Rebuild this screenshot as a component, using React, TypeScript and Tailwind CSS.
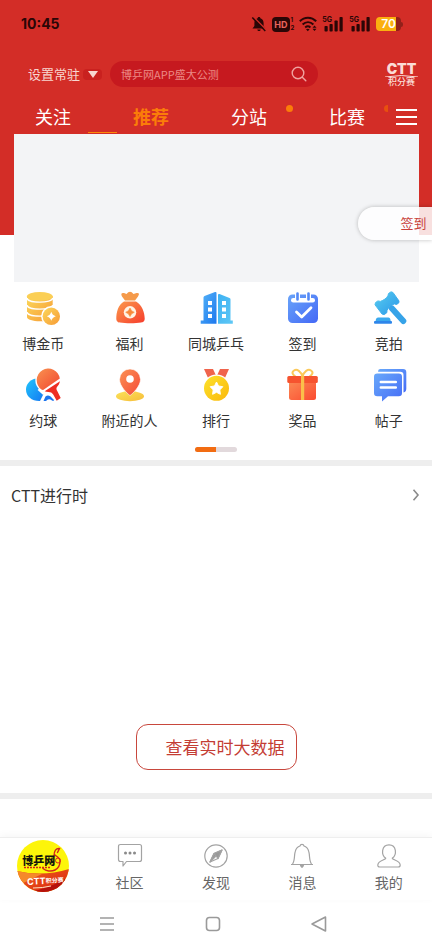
import { useState } from 'react'
import type { ReactNode } from 'react'

const tabs = [
  { id: 'follow', name: '关注' },
  { id: 'recommend', name: '推荐' },
  { id: 'station', name: '分站', dot: true },
  { id: 'match', name: '比赛' },
]

function Gradient({ id, from, to }: { id: string; from: string; to: string }) {
  return (
    <linearGradient id={id} x1="0" y1="0" x2="1" y2="1">
      <stop offset="0" stopColor={from} />
      <stop offset="1" stopColor={to} />
    </linearGradient>
  )
}

function MenuSvg({ children }: { children: ReactNode }) {
  return (
    <svg className="h-9 w-9" viewBox="0 0 36 36" fill="none" aria-hidden="true">
      {children}
    </svg>
  )
}

function CoinsIcon() {
  return (
    <MenuSvg>
      <defs>
        <Gradient id="coins" from="#fbd85a" to="#f79a35" />
      </defs>
      <path d="M2 6v21c0 2.600 5.800 4.300 12.800 4.300s12.900-1.700 12.900-4.300V6z" fill="url(#coins)" />
      <ellipse cx="14.800" cy="6.400" rx="12.900" ry="4.400" fill="#fbcf55" />
      <path d="M2 8c0 5.500 25.700 5.500 25.700 0M2 15c0 5.500 25.700 5.500 25.700 0M2 22c0 5.500 25.700 5.500 25.700 0" stroke="#fff" strokeWidth="1.400" />
      <circle cx="26.300" cy="26.300" r="10.200" fill="#fff" />
      <circle cx="26.300" cy="26.300" r="8.700" fill="url(#coins)" />
      <path d="M26.300 21.800q1 3.500 4.500 4.500q-3.500 1-4.500 4.500q-1-3.500-4.500-4.500q3.500-1 4.500-4.500z" fill="#fff" />
    </MenuSvg>
  )
}

function BagIcon() {
  return (
    <MenuSvg>
      <defs>
        <Gradient id="bag" from="#fb9a4c" to="#f63c2c" />
      </defs>
      <path d="M13 10.500L10 6.500Q8 2.500 12 3L14.500 4Q18 -.5 21.500 4L24.500 3Q28.500 2.500 26 6.500L23 10.500z" fill="#f59a4a" />
      <path d="M12 11.500h12c6 3.500 8.700 11 8.700 17 0 3-1.500 3.500-3.500 4.100-6 1-15.400 1-21.400 0-2-.6-3.500-1.100-3.500-4.100C4.300 22.500 6 15 12 11.500z" fill="url(#bag)" />
      <circle cx="18" cy="22.300" r="6.200" fill="#fff3e4" />
      <path d="M18 18q1 3.300 4.300 4.300q-3.300 1-4.300 4.300q-1-3.300-4.300-4.300q3.300-1 4.300-4.300z" fill="#f88a3a" stroke="#f88a3a" strokeWidth=".6" />
    </MenuSvg>
  )
}

function CityIcon() {
  return (
    <MenuSvg>
      <defs>
        <Gradient id="cityLeft" from="#55b4f8" to="#1d78ee" />
        <Gradient id="cityRight" from="#3db1f3" to="#5fc8f5" />
      </defs>
      <path d="M5.500 7.500Q5.500 6.500 6.500 6L17 2q1.500-.4 1.500 1v30.700H2.700v-3.200h2.800z" fill="url(#cityLeft)" />
      <path d="M20 5q0-1.500 1.500-1L31.500 8q1 .4 1 1.500v21h2.300v3.200H20z" fill="url(#cityRight)" />
      <path d="M10 11h4v4h-4zM10 17.500h4v4h-4zM10 24h4v4h-4zM24 11h4v4h-4zM24 17.500h4v4h-4zM24 24h4v4h-4z" fill="#fff" />
    </MenuSvg>
  )
}

function CheckInIcon() {
  return (
    <MenuSvg>
      <defs>
        <Gradient id="checkin" from="#69a4f9" to="#4468f6" />
      </defs>
      <rect x="4" y="4.500" width="30" height="28.500" rx="4.500" fill="url(#checkin)" />
      <rect x="7" y="8" width="24" height="4.500" rx="2.250" fill="#fff" />
      <path d="M13.500 3.500v6M24.500 3.500v6" stroke="#fff" strokeWidth="5" strokeLinecap="round" />
      <path d="M13.500 3.500v6M24.500 3.500v6" stroke="#5389f7" strokeWidth="2.600" strokeLinecap="round" />
      <path d="M12.500 22l5.200 5 9.300-9.300" stroke="#fff" strokeWidth="2.800" strokeLinecap="round" strokeLinejoin="round" />
    </MenuSvg>
  )
}

function GavelIcon() {
  return (
    <MenuSvg>
      <defs>
        <Gradient id="gavel" from="#58cdf0" to="#2a97e8" />
      </defs>
      <path d="M17.500 3.500l2.500-1.700 2 .7 6 8.500-.3 2-2.200 1.500-2-.6c-3.500 1-6 3.500-7.500 6.600l-.2 2.200-2.600 1.900-2.200-.6-7-9.200.5-2.200 2.400-1.700 2.500.5c3.500-1.300 6-3 7.500-5.600z" fill="url(#gavel)" stroke="url(#gavel)" strokeWidth="1" />
      <path d="M21 18.500L32.300 31" stroke="#36a3e8" strokeWidth="6" strokeLinecap="round" />
      <path d="M7 27.500h10.500q1.500 0 1.800 1.500l.4 2H4.600l.4-2Q5.500 27.500 7 27.500z" fill="#3aa9ee" />
      <rect x="3" y="31" width="18" height="2.800" rx="1" fill="#2e86ea" />
    </MenuSvg>
  )
}

function PaddleIcon() {
  return (
    <MenuSvg>
      <defs>
        <Gradient id="paddleRed" from="#f99250" to="#f1452f" />
        <Gradient id="paddleBlue" from="#22c5fb" to="#1478f2" />
      </defs>
      <path d="M10.500 11.500C4 13 1 18 1 22.500 1 29.500 7 34.300 15 34l4-8z" fill="url(#paddleBlue)" />
      <path d="M18.500 34l2-4.500c2.500-2 5-.5 6.500 1.500l2 2q-.5 1.500-2 .5-3.500-2.500-6 .5z" fill="#1c74ee" />
      <circle cx="23.500" cy="13" r="13.200" fill="#fff" />
      <path d="M14 21.500l5.500 5" stroke="#fff" strokeWidth="4" />
      <path d="M34.800 11.500A11.600 11.600 0 1 0 16.500 22.500q1 .8 2 .3z" fill="url(#paddleRed)" />
      <path d="M35 14.300C34.500 16.500 33.500 18.500 31.800 20.300c-.8 1.200-.2 2.500.6 4l3.300 6.700-4 2.800-3.500-6.300c-1-1.700-2.700-2.500-4.700-2.500-1.500 0-2.700-.3-3.800-.8z" fill="#ee2d22" />
    </MenuSvg>
  )
}

function NearbyIcon() {
  return (
    <MenuSvg>
      <defs>
        <Gradient id="pin" from="#fb9254" to="#f54a38" />
        <Gradient id="pinBase" from="#fae25a" to="#f7bd3a" />
      </defs>
      <ellipse cx="18" cy="29.300" rx="14" ry="5" fill="url(#pinBase)" />
      <path d="M18 28.500C15.500 27 7.500 19 7.500 12.500a10.500 10.500 0 0 1 21 0C28.500 19 20.500 27 18 28.500z" fill="url(#pin)" stroke="#fff" strokeWidth=".6" />
      <circle cx="18" cy="12" r="3.800" fill="#fff" />
    </MenuSvg>
  )
}

function MedalIcon() {
  return (
    <MenuSvg>
      <defs>
        <Gradient id="medal" from="#fce22c" to="#fbb80b" />
      </defs>
      <path d="M6 2h9l3 6.500-7.500 3.500zM31 2h-9l-3 6.500 7.500 3.500z" fill="#f0644c" />
      <circle cx="18.500" cy="21.300" r="13.800" fill="#fff" />
      <circle cx="18.500" cy="21.300" r="12.500" fill="url(#medal)" />
      <path d="M18.500 15l2 4 4.300.7-3 3.200.6 4.400-3.900-2-3.900 2 .6-4.400-3-3.200 4.300-.7z" fill="#fff" stroke="#fff" strokeWidth="1" strokeLinejoin="round" />
    </MenuSvg>
  )
}

function GiftIcon() {
  return (
    <MenuSvg>
      <defs>
        <Gradient id="gift" from="#fb8a55" to="#fb4b30" />
      </defs>
      <path d="M18.500 9.500C17 4.500 13 1.500 10 3.500S9 8 11.500 9.500M18.500 9.500C20 4.500 24 1.500 27 3.500s1 4.500-1.500 6" stroke="#fbc95a" strokeWidth="2" />
      <rect x="5" y="14" width="27" height="19" rx="2.500" fill="url(#gift)" />
      <rect x="3.300" y="9" width="30.500" height="7" rx="1.500" fill="#f6532f" />
      <rect x="17" y="9" width="3.200" height="24" fill="#fbc04a" />
    </MenuSvg>
  )
}

function PostsIcon() {
  return (
    <MenuSvg>
      <defs>
        <Gradient id="posts" from="#68a8fa" to="#466df6" />
      </defs>
      <path d="M9 2h23q3.300 0 3.300 3.300v16.500q0 3-2.800 3.700V8q0-3.300-3.300-3.300H7Q7 2 9 2z" fill="url(#posts)" />
      <path d="M6.300 6.500h21.400q3.300 0 3.300 3.300V26q0 3.300-3.300 3.300H17L11 34.500v-5.200H6.300Q3 29.300 3 26V9.800q0-3.300 3.300-3.300z" fill="url(#posts)" />
      <path d="M9.800 15h15M9.800 20.500h15" stroke="#fff" strokeWidth="2.500" strokeLinecap="round" />
    </MenuSvg>
  )
}

const menuItems = [
  { name: '博金币', icon: <CoinsIcon /> },
  { name: '福利', icon: <BagIcon /> },
  { name: '同城乒乓', icon: <CityIcon /> },
  { name: '签到', icon: <CheckInIcon /> },
  { name: '竞拍', icon: <GavelIcon /> },
  { name: '约球', icon: <PaddleIcon /> },
  { name: '附近的人', icon: <NearbyIcon /> },
  { name: '排行', icon: <MedalIcon /> },
  { name: '奖品', icon: <GiftIcon /> },
  { name: '帖子', icon: <PostsIcon /> },
]

function Signal() {
  return (
    <span className="relative block h-4 w-[22px]">
      <span className="absolute left-0 top-0 text-[7px] font-bold leading-[7px]">5G</span>
      <svg className="h-4 w-[22px]" viewBox="0 0 22 16" fill="currentColor" aria-hidden="true">
        <rect x="2.500" y="10" width="3.200" height="5.500" rx=".8" />
        <rect x="7.500" y="8" width="3.200" height="7.500" rx=".8" />
        <rect x="12.500" y="4.500" width="3.200" height="11" rx=".8" />
        <rect x="17.500" y="1" width="3.200" height="14.500" rx=".8" />
      </svg>
    </span>
  )
}

function StatusBar() {
  return (
    <div className="flex h-12 items-center justify-between pl-[21px] pr-[29px] font-['Inter',sans-serif] text-[#2a0606]">
      <span className="text-[14px] font-bold leading-5">10:45</span>
      <div className="flex items-center gap-[5px]">
        <svg className="h-4 w-4" viewBox="0 0 16 16" fill="currentColor" aria-hidden="true">
          <path d="M8 1c.8 0 1.300.5 1.400 1.200C11.500 2.900 12.600 4.600 12.600 7v3l1.900 2.500H1.500L3.400 10V7C3.400 4.600 4.500 2.900 6.600 2.200 6.700 1.500 7.200 1 8 1zM6.300 13.500h3.400C9.500 14.500 8.900 15 8 15s-1.500-.5-1.700-1.500z" />
          <path d="M2.500 1L15.500 14" stroke="#d32d27" strokeWidth="1.500" />
          <path d="M1.300 1.500l13 13.500" stroke="currentColor" strokeWidth="1.500" />
        </svg>
        <span className="flex items-center gap-px">
          <span className="rounded-[4px] bg-[#2a0606] px-[2px] text-[9px] font-bold leading-[15px] text-[#e8645c]">HD</span>
          <span className="flex flex-col text-[6px] font-bold leading-[8px]">
            <span>1</span>
            <span>2</span>
          </span>
        </span>
        <svg className="h-4 w-[18px]" viewBox="0 0 18 16" fill="none" stroke="currentColor" strokeWidth="2" aria-hidden="true">
          <path d="M.8 5.200c4.700-4.700 11.700-4.700 16.400 0M3.600 8.500c3.200-3.100 7.600-3.100 10.800 0M6.200 11.400c1.600-1.400 3.600-1.400 5.200 0" />
          <path d="M7 13.200q1.800-1 3.600 0L8.800 15.200z" fill="currentColor" stroke="none" />
          <path d="M15.500 9.500l2 2.300h-4zM15.500 15l2-2.300h-4z" fill="currentColor" stroke="none" />
        </svg>
        <Signal />
        <Signal />
        <span className="flex items-center">
          <span className="rounded-l-[4px] bg-[#fbb00f] pl-[5px] text-[12px] font-semibold leading-[14px] text-white">70</span>
          <span className="h-[14px] w-[5px] rounded-r-[4px] bg-[#92201a]" />
          <span className="h-[5px] w-[2px] rounded-r-full bg-[#92201a]" />
        </span>
      </div>
    </div>
  )
}

function AppLogo() {
  return (
    <span className="relative flex h-[52px] w-[52px] flex-col items-center overflow-hidden rounded-full bg-[#fdf50a]">
      <svg className="absolute inset-0" viewBox="0 0 52 52" fill="none" aria-hidden="true">
        <defs>
          <Gradient id="logo" from="#f0641c" to="#d8200f" />
        </defs>
        <path d="M0 31q26 6 52-2v23H0z" fill="url(#logo)" />
        <path d="M0 31q14 3.500 26 2.500L0 46z" fill="#f58a2a" />
        <path d="M12 52q18-3 36-13v13z" fill="#b5120c" />
        <path d="M37 16c0-5 2-8 5.500-7.500l-2 4M38 15c3 3 5 2 5 6s-1 7-5 9-9 1-12-1.500" stroke="#d3261b" strokeWidth="1.400" strokeLinecap="round" />
        <circle cx="41" cy="20.500" r="2.500" stroke="#d3261b" />
        <path d="M7 27.500h27" stroke="#d3261b" strokeWidth="1.600" strokeDasharray="2 1" />
        <path d="M16 48q10 0 18-2" stroke="#fbe0c0" />
      </svg>
      <span className="relative mr-[9px] mt-[13px] text-[11px] font-black leading-[14px] text-[#15150a]">博乒网</span>
      <span className="relative ml-[5px] mt-[9px] flex -rotate-3 items-center whitespace-nowrap text-[6px] font-bold leading-[10px] text-white">
        <span className="font-['Inter',sans-serif] text-[9px]">CTT</span>积分赛
      </span>
    </span>
  )
}

const navItems = [
  {
    name: '社区',
    icon: (
      <>
        <path d="M4.500 2.500h19q2 0 2 2v13q0 2-2 2H10.500L7 24v-4.500H4.500q-2 0-2-2v-13q0-2 2-2z" />
        <path d="M9.500 11h.01M14 11h.01M18.500 11h.01" strokeWidth="3" strokeLinecap="round" stroke="#8a8a8a" />
      </>
    ),
  },
  {
    name: '发现',
    icon: (
      <>
        <circle cx="14" cy="14" r="11.200" />
        <path d="M20 8l-4 8.500L8 20l4-8.500z" />
        <path d="M20 8l-8 3.500 4 5zM8 20l4-8.500 2 2.500z" fill="#999" />
      </>
    ),
  },
  {
    name: '消息',
    icon: (
      <>
        <path d="M3 22.500h22M4.500 22c2.500-3 1.500-8 2.700-12.300C8 6.500 10 4.500 12 4c.5-2.300 3.500-2.300 4 0 2 .5 4 2.500 4.800 5.700C22 14 21 19 23.500 22" />
        <path d="M12.500 23.500h3l-1.500 1.800z" fill="#777" />
      </>
    ),
  },
  {
    name: '我的',
    icon: (
      <path d="M10.800 16.200C6 13 6.200 2.800 14 2.800s8 10.200 3.200 13.400c.3 2 7.800 2 8 6.800 0 1.500-.7 2-2 2H4.800c-1.300 0-2-.5-2-2 .2-4.800 7.700-4.800 8-6.800z" />
    ),
  },
]

export default function App() {
  const [activeTab, setActiveTab] = useState('recommend')

  return (
    <div className="flex min-h-screen flex-col overflow-x-hidden bg-white font-['Noto_Sans_CJK_SC',sans-serif] text-[#333]">
      {/* Header */}
      <header className="bg-[#d32d27] pb-[101px]">
        <StatusBar />

        <div className="flex h-[52px] items-center pl-7 pr-[14px]">
          <button className="flex items-center gap-[3px] text-[13px] leading-5 text-[#f8d6d0]">
            设置常驻
            <span className="flex h-[11px] w-[19px] items-center justify-center rounded-[4px] bg-[#c9211f]">
              <svg className="h-[7px] w-[10px]" viewBox="0 0 10 7" fill="#f8d6d0" aria-hidden="true">
                <path d="M0 0h10L5 7z" />
              </svg>
            </span>
          </button>
          <label className="ml-2 flex h-[26px] min-w-0 flex-1 items-center rounded-full bg-[#c6191f] pl-[11px] pr-[11px]">
            <input
              type="text"
              aria-label="搜索"
              placeholder="博乒网APP盛大公测"
              className="min-w-0 flex-1 bg-transparent text-[11px] leading-4 text-white outline-none placeholder:text-[#ec8a86]"
            />
            <svg className="h-4 w-4" viewBox="0 0 16 16" fill="none" stroke="#f0a3a0" strokeWidth="1.400" strokeLinecap="round" aria-hidden="true">
              <circle cx="7" cy="7" r="5.800" />
              <path d="M11.300 11.300l3.500 3.500" />
            </svg>
          </label>
          <button className="ml-[67px] flex w-[33px] flex-col items-center text-[#fbdcd6]">
            <span className="font-['Inter',sans-serif] text-[14px] font-black leading-3">CTT</span>
            <svg className="h-[2px] w-full" viewBox="0 0 33 2" fill="none" stroke="currentColor" aria-hidden="true">
              <path d="M0 2Q16-1 33 2" />
            </svg>
            <span className="text-[9px] font-medium leading-[9px]">积分赛</span>
          </button>
        </div>

        <div className="flex h-[34px] items-stretch">
          <nav className="flex min-w-0 flex-1 overflow-hidden pl-1">
            {tabs.map((tab) => (
              <button
                key={tab.id}
                onClick={() => setActiveTab(tab.id)}
                className={`relative w-[98px] shrink-0 pb-[2px] text-[18px] leading-8 ${
                  activeTab === tab.id ? 'font-bold text-[#fb7d09]' : 'text-white'
                }`}
              >
                {tab.name}
                {tab.dot && <span className="absolute right-[5px] top-[5px] h-[7px] w-[7px] rounded-full bg-[#fb7d09]" />}
                {activeTab === tab.id && <span className="absolute -left-[14px] bottom-px h-px w-[29px] bg-[#fb8a09]" />}
              </button>
            ))}
          </nav>
          <span className="mt-[5px] h-[7px] w-1 rounded-l-full bg-[#e8500f]" />
          <button aria-label="菜单" className="ml-2 mr-[15px] flex flex-col items-center justify-center gap-[5px]">
            <span className="h-[2px] w-[21px] bg-white" />
            <span className="h-[2px] w-[21px] bg-white" />
            <span className="h-[2px] w-[21px] bg-white" />
          </button>
        </div>
      </header>

      <main className="flex-1">
        {/* Banner */}
        <section className="relative -mt-[101px] pl-[14px] pr-[13px]">
          <div className="h-[148px] bg-[#f3f4f6]" />
          <button className="absolute right-0 top-[73px] h-[33px] w-[74px] rounded-l-full bg-white/85 pb-[2px] pl-[37px] text-[13px] text-[#c8413b] shadow-[0_0_4px_rgba(0,0,0,0.25)]">
            签到
          </button>
        </section>

        {/* Menu */}
        <section className="pb-2 pt-2">
          <div className="grid grid-cols-5 gap-y-[14px]">
            {menuItems.map((item) => (
              <button key={item.name} className="flex flex-col items-center gap-[7px] text-[14px] leading-5">
                {item.icon}
                {item.name}
              </button>
            ))}
          </div>
          <div className="mx-auto mt-[17px] flex h-[5px] w-[42px] overflow-hidden rounded-full bg-[#e2d9dc]">
            <span className="w-1/2 bg-[#f26c12]" />
          </div>
        </section>

        {/* Live data */}
        <section className="border-y-[6px] border-[#eeeeee]">
          <button className="flex w-full items-center justify-between pb-[15px] pl-[11px] pr-3 pt-[17px] text-[16px] leading-6">
            CTT进行时
            <svg className="h-3 w-2" viewBox="0 0 8 12" fill="none" stroke="#8a8a8a" strokeWidth="1.600" aria-hidden="true">
              <path d="M1.500 .8l4.500 5.200-4.500 5.200" />
            </svg>
          </button>
          <div className="flex justify-center pb-[23px] pt-[202px]">
            <button className="rounded-[12px] border border-[#c8473d] py-[10px] pl-[29px] pr-[11px] text-[17px] leading-6 text-[#c43c33]">
              查看实时大数据
            </button>
          </div>
        </section>
      </main>

      {/* Bottom navigation */}
      <nav className="grid h-[63px] grid-cols-5 border-t border-[#eeeeee] bg-white shadow-[0_-2px_8px_rgba(0,0,0,0.04)]">
        <button aria-label="首页" className="flex items-start justify-center pt-[2px]">
          <AppLogo />
        </button>
        {navItems.map((item) => (
          <button key={item.name} className="flex flex-col items-center pt-1 text-[14px] leading-5 text-[#666]">
            <svg className="mb-[2px] h-7 w-7" viewBox="0 0 28 28" fill="none" stroke="#a3a3a3" strokeWidth="1.200" strokeLinejoin="round" aria-hidden="true">
              {item.icon}
            </svg>
            {item.name}
          </button>
        ))}
      </nav>

      {/* System keys */}
      <div className="flex h-[50px] items-center justify-center gap-[90px] pb-[2px] pr-[6px]">
        <button aria-label="最近任务">
          <svg className="h-4 w-4" viewBox="0 0 16 16" stroke="#9a9a9a" strokeWidth="1.600" aria-hidden="true">
            <path d="M1 2h14M1 8h14M1 14h14" />
          </svg>
        </button>
        <button aria-label="主屏幕">
          <svg className="h-4 w-4" viewBox="0 0 16 16" fill="none" stroke="#9a9a9a" strokeWidth="1.600" aria-hidden="true">
            <rect x="1.500" y="1.500" width="13" height="13" rx="3" />
          </svg>
        </button>
        <button aria-label="返回">
          <svg className="h-4 w-4" viewBox="0 0 16 16" fill="none" stroke="#9a9a9a" strokeWidth="1.600" strokeLinejoin="round" aria-hidden="true">
            <path d="M14.500 1v14L1 8z" />
          </svg>
        </button>
      </div>
    </div>
  )
}
